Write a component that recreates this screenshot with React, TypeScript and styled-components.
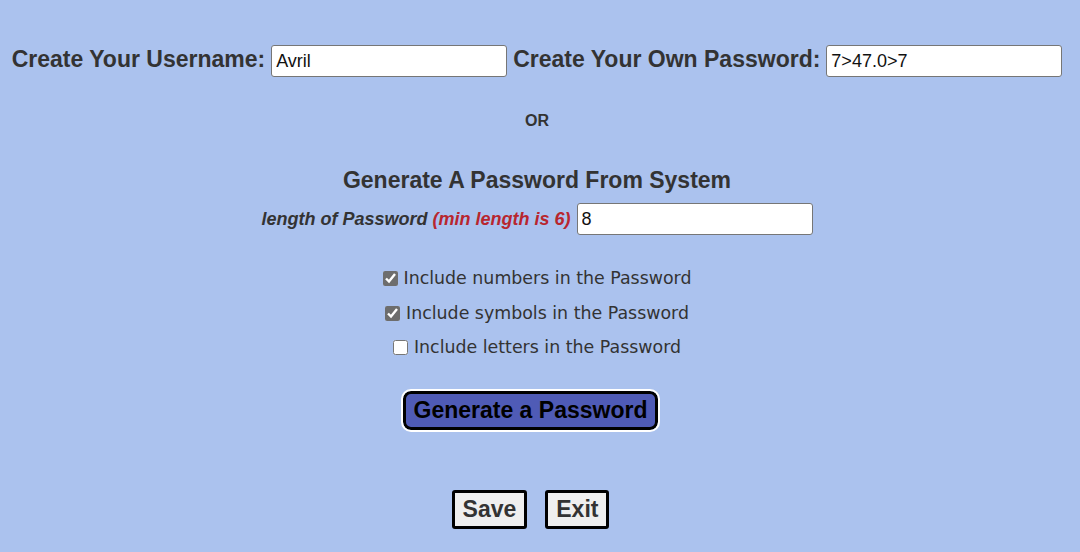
import React, { useState } from "react";
import styled, { createGlobalStyle } from "styled-components";

const GlobalStyle = createGlobalStyle`
  html, body {
    margin: 0;
    padding: 0;
    background-color: #abc2ee;
  }
  body {
    font-family: "Liberation Sans", Arial, sans-serif;
    color: #333333;
  }
`;

const Root = styled.div`
  width: 1074px;
  height: 552px;
  padding-top: 45px;
  box-sizing: border-box;
  display: flex;
  flex-direction: column;
  align-items: center;
`;

const TopRow = styled.div`
  display: flex;
  align-items: center;
  gap: 6px;
`;

const BigLabel = styled.label`
  font-size: 23px;
  font-weight: bold;
  color: #333333;
  white-space: nowrap;
  margin-top: -3px;
`;

const TextBox = styled.input`
  width: 236px;
  height: 32px;
  box-sizing: border-box;
  border: 1px solid #767676;
  border-radius: 3px;
  background: #ffffff;
  padding: 0 4px;
  font-family: "Liberation Sans", Arial, sans-serif;
  font-size: 18px;
  color: #111111;
  outline: none;
`;

const Or = styled.div`
  margin-top: 35px;
  font-size: 16px;
  font-weight: bold;
  color: #333333;
`;

const Heading = styled.h2`
  margin: 37px 0 0;
  font-size: 23px;
  font-weight: bold;
  color: #333333;
`;

const LengthRow = styled.div`
  margin-top: 9px;
  display: flex;
  align-items: center;
  gap: 6px;
`;

const LengthLabel = styled.label`
  font-size: 18px;
  font-style: italic;
  font-weight: 600;
  color: #333333;
  span {
    color: #b8262e;
  }
`;

const Options = styled.div`
  margin-top: 33px;
  display: flex;
  flex-direction: column;
  align-items: center;
  gap: 13.5px;
`;

const Option = styled.label`
  display: flex;
  align-items: center;
  font-family: "DejaVu Sans", Verdana, sans-serif;
  font-size: 17.4px;
  color: #333333;
  line-height: 21px;
  input {
    width: 15px;
    height: 15px;
    margin: 0 6px 0 0;
    accent-color: #6d6d6d;
  }
`;

const GenerateButton = styled.button`
  margin-top: 33px;
  margin-right: 13px;
  width: 255px;
  height: 39px;
  border: 3px solid #000000;
  border-radius: 8px;
  outline: 2px solid #ffffff;
  background-color: #4f5bb6;
  font-family: "Liberation Sans", Arial, sans-serif;
  font-size: 23px;
  font-weight: bold;
  color: #000000;
  cursor: pointer;
`;

const Footer = styled.div`
  margin-top: 60px;
  margin-right: 13px;
  display: flex;
  gap: 18px;
`;

const PlainButton = styled.button`
  height: 39px;
  padding: 0 8px;
  border: 3px solid #000000;
  border-radius: 3px;
  background-color: #efefef;
  font-family: "Liberation Sans", Arial, sans-serif;
  font-size: 23px;
  font-weight: bold;
  color: #333333;
  cursor: pointer;
`;

export default function App() {
  const [username, setUsername] = useState("Avril");
  const [password, setPassword] = useState("7>47.0>7");
  const [length, setLength] = useState("8");
  const [numbers, setNumbers] = useState(true);
  const [symbols, setSymbols] = useState(true);
  const [letters, setLetters] = useState(false);

  return (
    <>
      <GlobalStyle />
      <Root>
        <TopRow>
          <BigLabel>Create Your Username:</BigLabel>
          <TextBox value={username} onChange={(e) => setUsername(e.target.value)} />
          <BigLabel>Create Your Own Password:</BigLabel>
          <TextBox value={password} onChange={(e) => setPassword(e.target.value)} />
        </TopRow>
        <Or>OR</Or>
        <Heading>Generate A Password From System</Heading>
        <LengthRow>
          <LengthLabel>
            length of Password <span>(min length is 6)</span>
          </LengthLabel>
          <TextBox value={length} onChange={(e) => setLength(e.target.value)} />
        </LengthRow>
        <Options>
          <Option>
            <input type="checkbox" checked={numbers} onChange={() => setNumbers(!numbers)} />
            Include numbers in the Password
          </Option>
          <Option>
            <input type="checkbox" checked={symbols} onChange={() => setSymbols(!symbols)} />
            Include symbols in the Password
          </Option>
          <Option>
            <input type="checkbox" checked={letters} onChange={() => setLetters(!letters)} />
            Include letters in the Password
          </Option>
        </Options>
        <GenerateButton>Generate a Password</GenerateButton>
        <Footer>
          <PlainButton>Save</PlainButton>
          <PlainButton>Exit</PlainButton>
        </Footer>
      </Root>
    </>
  );
}
